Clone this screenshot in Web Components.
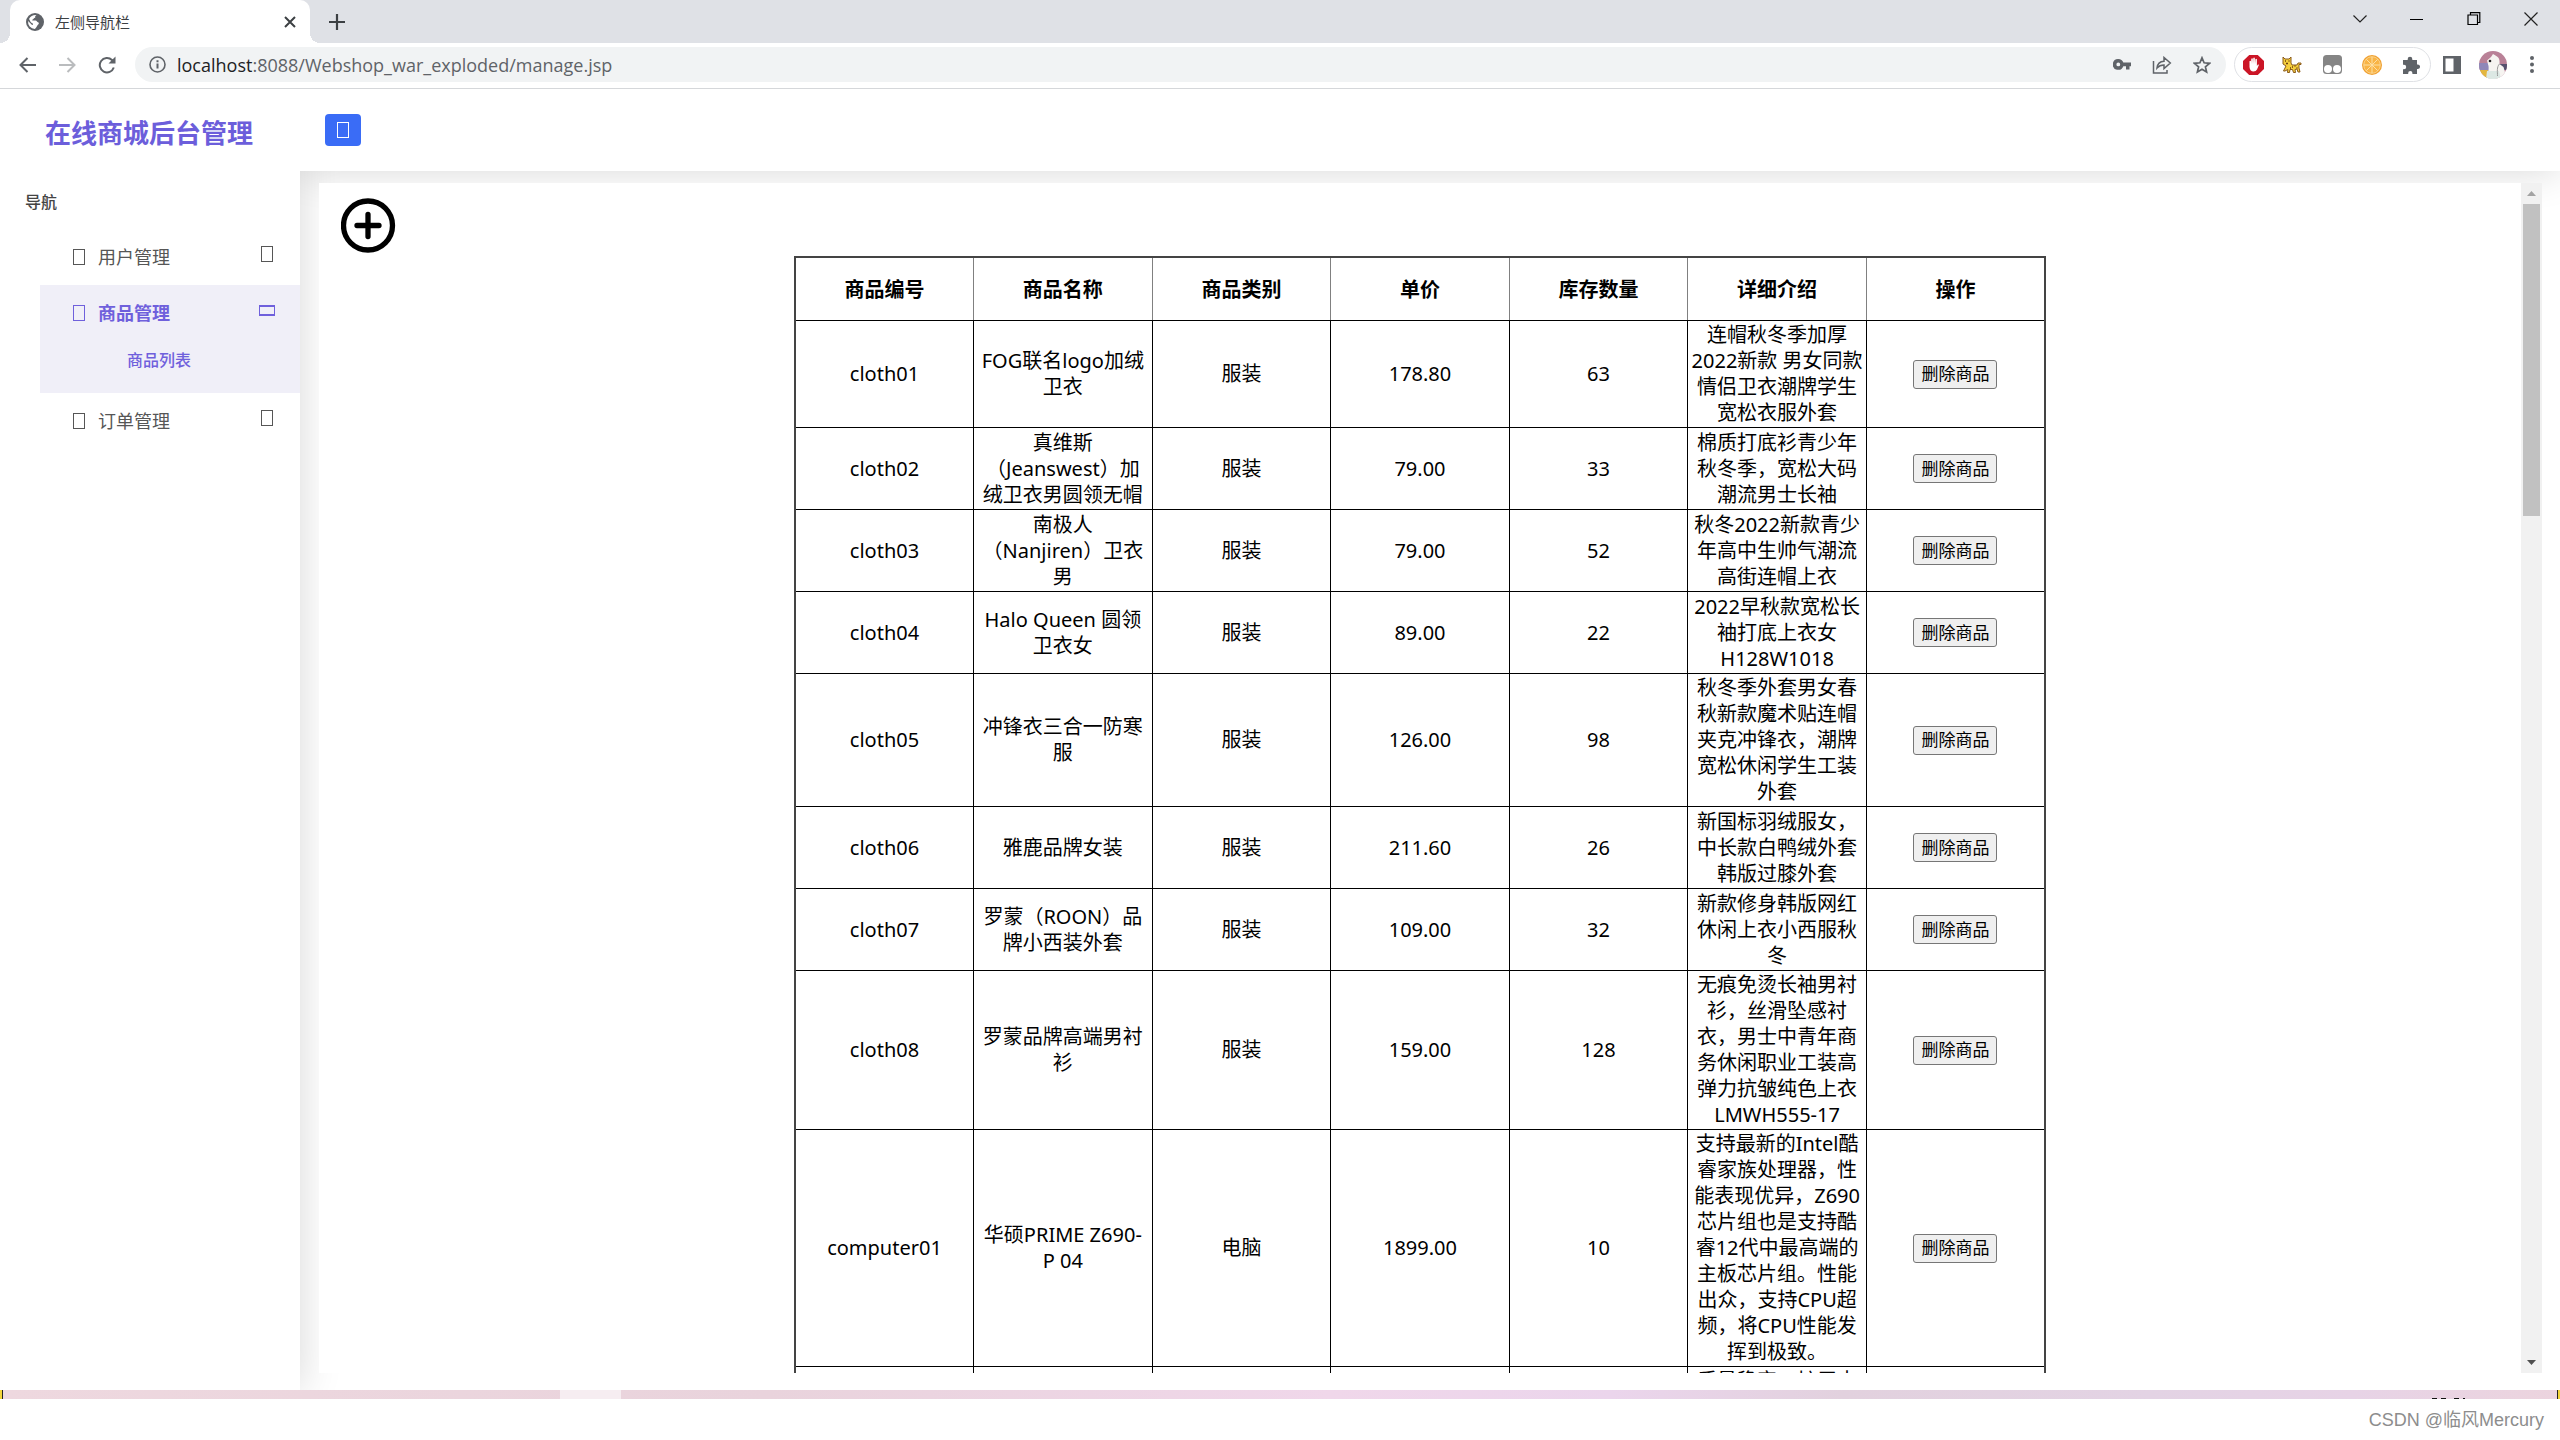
<!DOCTYPE html>
<html lang="zh-CN">
<head>
<meta charset="utf-8">
<title>左侧导航栏</title>
<style>
  html, body { margin: 0; height: 100%; }
  body {
    font-family: "Noto Sans", "Noto Sans CJK SC", sans-serif;
    font-size: 20px; line-height: 26px; color: #000; background: #fff;
    text-spacing-trim: space-all;
  }
</style>
</head>
<body>
<shop-desktop></shop-desktop>

<script>
const define = (name, html, setup) => {
  const template = document.createElement('template');
  template.innerHTML = html;
  customElements.define(name, class extends HTMLElement {
    constructor() {
      super();
      this.attachShadow({ mode: 'open' }).append(template.content.cloneNode(true));
    }
    connectedCallback() { if (setup) setup(this, this.shadowRoot); }
  });
};

/* Window title bar with its tab */
define('tab-strip', `
  <style>
    :host { display: flex; height: 43px; flex: none; background: #dfe1e6; padding: 0 1px 0 10px; }
    .tab { position: relative; display: flex; align-items: center; width: 300px; box-sizing: border-box;
      padding: 0 12px 0 16px; background: #fff; border-radius: 10px 10px 0 0; color: #3c4043; font-size: 15px; }
    .tab::before, .tab::after { content: ""; position: absolute; bottom: 0; width: 10px; height: 10px; }
    .tab::before { left: -10px; background: radial-gradient(circle at 0 0, transparent 10px, #fff 10px); }
    .tab::after { right: -10px; background: radial-gradient(circle at 100% 0, transparent 10px, #fff 10px); }
    .name { margin-left: 11px; flex: 1; }
    button { border: 0; padding: 0; background: none; display: grid; place-items: center; }
    .close { width: 16px; height: 40px; }
    .new { width: 54px; height: 43px; }
    .win { margin-left: auto; display: flex; }
    .win button { width: 57px; height: 38px; }
    svg { display: block; }
  </style>
  <div class="tab">
    <svg width="18" height="18" viewBox="0 0 18 18"><circle cx="9" cy="9" r="9" fill="#5f6368"/><path d="M10.500 2 9 3.300c.8.700.3 1.600-.6 1.700-.9.100-.5 1.200-1.600 1.400-.9.200-.8 1 .2 1.100l2.600.1c1.300.1 1.100 1.500 2.300 1.600 1.200.2 1.200 1.500.3 2.300-.9.700-1 1.600-1.700 2.500-.5.700-1 1.400-1.600 2A7 7 0 0 1 2.100 8l3.700 3.700c.4.500 1.200.3 1.200-.5 0-.9-.8-1.100-1.600-1.500C4.300 9 4 7.500 3 6 4.500 3 7.500 1.600 10.500 2z" fill="#fff"/></svg>
    <span class="name">左侧导航栏</span>
    <button class="close" aria-label="关闭标签页"><svg width="12" height="12" viewBox="0 0 12 12"><path d="M1 1l10 10M11 1 1 11" stroke="#3c4043" stroke-width="2"/></svg></button>
  </div>
  <button class="new" aria-label="新标签页"><svg width="16" height="16" viewBox="0 0 16 16"><path d="M8 0v16M0 8h16" stroke="#3c4043" stroke-width="2.200"/></svg></button>
  <div class="win">
    <button aria-label="搜索标签页"><svg width="14" height="8" viewBox="0 0 14 8"><path d="M.5.5 7 7 13.500.5" fill="none" stroke="#222" stroke-width="1.200"/></svg></button>
    <button aria-label="最小化"><svg width="13" height="1"><rect width="13" height="1"/></svg></button>
    <button aria-label="还原"><svg width="14" height="14" viewBox="0 0 14 14"><path d="M1 3h9.500v9.500H1zM3.500 3V.7h9.300V10.500h-2.300" fill="none" stroke="#000" stroke-width="1.200"/></svg></button>
    <button aria-label="关闭"><svg width="14" height="14" viewBox="0 0 14 14"><path d="M.5.5l13 13M13.500.5l-13 13" stroke="#222" stroke-width="1.200"/></svg></button>
  </div>`);

/* Address row */
define('address-bar', `
  <style>
    :host { display: flex; align-items: center; height: 43px; flex: none; padding: 0 10px 2px 7px; background: #fff;
      border-bottom: 1px solid #d5d7da; }
    button { border: 0; padding: 0; width: 40px; height: 34px; background: none; display: grid; place-items: center; flex: none; }
    svg { display: block; flex: none; }
    .box { flex: 1; display: flex; align-items: center; height: 35px; margin-left: 8px; background: #f1f3f4; border-radius: 18px; padding-left: 14px; padding-right: 4px; }
    .url { flex: 1; margin-left: 11px; font-size: 18px; font-family: "Open Sans", sans-serif; color: #5f6368; }
    .url b { font-weight: 400; color: #202124; }
    .ext { display: flex; margin: 0 1px 0 8px; border: 1px solid #dfe1e5; border-radius: 18px; height: 33px; align-items: center; }
    .ext button:first-child { width: 37px; }
    .ext button:last-child { width: 38px; }
    .me { width: 42px; } .dots { width: 36px; }
  </style>
  <button aria-label="返回"><svg width="17" height="16" viewBox="0 0 17 16"><path d="M17 8H2M8.500 1 1.500 8l7 7" fill="none" stroke="#5f6368" stroke-width="2"/></svg></button>
  <button aria-label="前进"><svg width="17" height="16" viewBox="0 0 17 16"><path d="M0 8h15M8.500 1l7 7-7 7" fill="none" stroke="#babcbe" stroke-width="2"/></svg></button>
  <button aria-label="刷新"><svg width="18" height="18" viewBox="0 0 18 18"><path d="M15.800 11.500A7.200 7.200 0 1 1 14 4l1.500 1.500" fill="none" stroke="#5f6368" stroke-width="2"/><path d="M17.500.5v7h-7z" fill="#5f6368"/></svg></button>
  <div class="box">
    <svg width="17" height="17" viewBox="0 0 17 17"><circle cx="8.500" cy="8.500" r="7.500" fill="none" stroke="#5f6368" stroke-width="1.600"/><path d="M8.500 7.500v5M8.500 4.200v2" stroke="#5f6368" stroke-width="2"/></svg>
    <span class="url"><b>localhost</b>:8088/Webshop_war_exploded/manage.jsp</span>
    <button aria-label="密码"><svg width="18" height="11" viewBox="0 0 18 11"><path d="M5.300 0a5.500 5.300 0 0 1 5 3.600H18v3.600h-1.500v3.400H13V7.200h-2.700A5.400 5.400 0 1 1 5.300 0zm0 3.500a1.900 1.900 0 1 0 0 3.800 1.900 1.900 0 0 0 0-3.800z" fill="#5f6368" fill-rule="evenodd"/></svg></button>
    <button aria-label="分享"><svg width="20" height="18" viewBox="0 0 20 18"><path d="M1.500 5v12H15v-3M5 12c.5-4.500 3-6.500 7-6.700V1.500L18.300 7 12 12.500V9C9 9 7 9.800 5 12z" fill="none" stroke="#5f6368" stroke-width="1.500"/></svg></button>
    <button aria-label="收藏"><svg width="18" height="18" viewBox="0 0 18 18"><path d="M9 1.800l2.100 5 5.400.5-4.100 3.500 1.200 5.300L9 13.300l-4.600 2.800 1.200-5.300L1.500 7.300l5.400-.5z" fill="none" stroke="#5f6368" stroke-width="1.700"/></svg></button>
  </div>
  <div class="ext">
    <button aria-label="广告拦截"><svg width="21" height="20" viewBox="0 0 21 20"><path d="M6.200 0h8.600L21 6v8l-6.200 6H6.200L0 14V6z" fill="#cb1526"/><path d="M6.500 12V6.200q.8-.8 1.500 0V9l.3-5.300q.8-.8 1.500 0L10 9l.3-6q.8-.8 1.500 0L12 9l.4-4.800q.8-.8 1.500 0V11l1-1.500q1.200-.4 1 .6L14 14.500q-1 2-3.500 2Q7 16.500 6.500 12z" fill="#fff"/></svg></button>
    <button aria-label="小猫"><svg width="20" height="18" viewBox="0 0 20 18"><path d="M1 1l2 2h4l2-2v6l1 2h5l1-2h3v1.500h-2V12l1 4h-2l-1-3-2 .5.500 3h-2l-1-3H8l-.500 3h-2l.300-3L3 15H1.500L4 10 1 8z" fill="#f5cf3c" stroke="#8a5a1c"/><path d="M3 5h1M6.500 5h1M4 7.500h2M10 11h1M12.500 10h1M8 12h1M14.500 12h1" stroke="#6b3f10" stroke-width="1.300"/></svg></button>
    <button aria-label="脚本"><svg width="19" height="19" viewBox="0 0 19 19"><rect width="19" height="19" rx="3.500" fill="#858585"/><circle cx="5" cy="14" r="4" fill="#fff"/><circle cx="14" cy="14" r="4" fill="#fff"/></svg></button>
    <button aria-label="橙子"><svg width="20" height="20" viewBox="0 0 20 20"><circle cx="10" cy="10" r="10" fill="#f0a030"/><circle cx="10" cy="10" r="8.300" fill="#f9b445" stroke="#fbd48c"/><path d="M10 2v16M2 10h16M4.300 4.300l11.400 11.400M15.700 4.300 4.300 15.700" stroke="#fde0a6"/></svg></button>
    <button aria-label="扩展程序"><svg width="18" height="18" viewBox="0 0 18 18"><path d="M1 4h4.700V3a2.300 2.300 0 0 1 4.600 0v1H15v4.500h.8a2.200 2.200 0 0 1 0 4.500H15v5h-4.600v-1a2 2 0 0 0-4.200 0v1H1v-4.800h1a2.200 2.200 0 0 0 0-4.400H1z" fill="#5f6368"/></svg></button>
  </div>
  <button aria-label="侧边栏"><svg width="18" height="18" viewBox="0 0 18 18"><path d="M0 0h18v18H0zM2.500 2.500v13h8v-13z" fill="#5f6368" fill-rule="evenodd"/></svg></button>
  <button class="me" aria-label="用户"><svg width="28" height="28" viewBox="0 0 28 28"><defs><clipPath id="c"><circle cx="14" cy="14" r="14"/></clipPath></defs><g clip-path="url(#c)"><path d="M0 0h28v28H0z" fill="#b98197"/><path d="M0 12h10v8H0z" fill="#8f87b8"/><path d="M0 19h9v9H0z" fill="#e3b63f"/><path d="M19 13h9v6h-9z" fill="#56506e"/><path d="M8 28c1-6 2-9 1.500-13L8 9.500 12 6l2-3 2.500 1.500C20 6 21 9 20.500 13l4 3L28 28z" fill="#f6f4f1"/><path d="M8 20h12l2 8H7z" fill="#dce8e4"/><path d="M20.500 13c-3 3-2 8-2 12" stroke="#999" fill="none"/><circle cx="11" cy="10" r="1.300" fill="#222"/></g></svg></button>
  <button class="dots" aria-label="菜单"><svg width="4" height="17" viewBox="0 0 4 17"><g fill="#5f6368"><circle cx="2" cy="2" r="2"/><circle cx="2" cy="8.500" r="2"/><circle cx="2" cy="15" r="2"/></g></svg></button>`);

/* Empty glyph box shown by an icon font that has not loaded */
define('glyph-box', `
  <style>
    :host { display: block; flex: none; box-sizing: border-box; width: 12px; height: 16px; border: 1px solid currentColor; }
    :host([wide]) { width: 16px; height: 11px; border-width: 2px 1px; }
  </style>`);

/* One entry of the side menu; slotted links are its sub pages */
define('nav-entry', `
  <style>
    :host { display: block; margin-left: 40px; color: #565656; font-size: 18px; }
    :host([open]) { color: #6f60dc; background: #f0eff8; }
    a { display: flex; align-items: center; height: 56px; padding: 0 25px 0 33px; color: inherit; text-decoration: none; }
    :host([open]) a { font-weight: 700; }
    span { flex: 1; margin-left: 13px; }
    .sub { display: none; }
    :host([open]) .sub { display: block; height: 52px; padding: 5px 0 0 87px; box-sizing: border-box; }
    ::slotted(a) { color: inherit; font-size: 16px; font-weight: 500; text-decoration: none; }
    .mark { margin-bottom: 6px; width: 16px; display: grid; place-items: center; }
  </style>
  <a href="#"><glyph-box></glyph-box><span></span><div class="mark"></div></a>
  <div class="sub"><slot></slot></div>`, (el, root) => {
    root.querySelector('span').textContent = el.getAttribute('label');
    const box = document.createElement('glyph-box');
    if (el.hasAttribute('open')) box.setAttribute('wide', '');
    root.querySelector('.mark').replaceChildren(box);
  });

define('side-nav', `
  <style>
    :host { display: block; width: 300px; flex: none; background: #fff; box-shadow: 0 0 40px rgba(0,0,0,.16); }
    h1 { margin: 0; padding: 25px 2px 0 0; font-size: 26px; line-height: 38px; text-align: center; color: #6c5edb; }
    h2 { margin: 0; padding: 37px 0 14px 25px; font-size: 16px; line-height: 26px; font-weight: 500; color: #444; }
  </style>
  <h1>在线商城后台管理</h1>
  <h2>导航</h2>
  <nav>
    <nav-entry label="用户管理"></nav-entry>
    <nav-entry label="商品管理" open><a href="#list">商品列表</a></nav-entry>
    <nav-entry label="订单管理"></nav-entry>
  </nav>`);

define('top-bar', `
  <style>
    :host { display: flex; align-items: center; box-sizing: border-box; height: 82px; flex: none; padding-left: 25px; background: #fff;
      box-shadow: 0 0 40px rgba(0,0,0,.16); }
    button { width: 36px; height: 32px; border: 0; border-radius: 4px; padding: 0; background: #3a6cf6; color: #fff; display: grid; place-items: center; }
  </style>
  <button aria-label="折叠菜单"><glyph-box></glyph-box></button>`);

const products = [
  ['cloth01', 'FOG联名logo加绒卫衣', '服装', '178.80', '63', '连帽秋冬季加厚2022新款 男女同款情侣卫衣潮牌学生宽松衣服外套'],
  ['cloth02', '真维斯（Jeanswest）加\n绒卫衣男圆领无帽', '服装', '79.00', '33', '棉质打底衫青少年秋冬季，宽松大码潮流男士长袖'],
  ['cloth03', '南极人（Nanjiren）卫衣男', '服装', '79.00', '52', '秋冬2022新款青少年高中生帅气潮流高街连帽上衣'],
  ['cloth04', 'Halo Queen 圆领卫衣女', '服装', '89.00', '22', '2022早秋款宽松长袖打底上衣女H128W1018'],
  ['cloth05', '冲锋衣三合一防寒服', '服装', '126.00', '98', '秋冬季外套男女春秋新款魔术贴连帽夹克冲锋衣，潮牌宽松休闲学生工装外套'],
  ['cloth06', '雅鹿品牌女装', '服装', '211.60', '26', '新国标羽绒服女，中长款白鸭绒外套韩版过膝外套'],
  ['cloth07', '罗蒙（ROON）品牌小西装外套', '服装', '109.00', '32', '新款修身韩版网红休闲上衣小西服秋冬'],
  ['cloth08', '罗蒙品牌高端男衬衫', '服装', '159.00', '128', '无痕免烫长袖男衬衫，丝滑坠感衬衣，男士中青年商务休闲职业工装高弹力抗皱纯色上衣LMWH555-17'],
  ['computer01', '华硕PRIME Z690-\nP 04', '电脑', '1899.00', '10', '支持最新的Intel酷睿家族处理器，性能表现优异，Z690芯片组也是支持酷睿12代中最高端的主板芯片组。性能出众，支持CPU超频，将CPU性能发挥到极致。'],
  ['', '', '', '', '', '质量稳定，扩展丰']
];

define('product-table', `
  <style>
    :host { display: block; width: 1252px; max-width: 100%; margin: 3px auto 0; }
    table { width: 100%; table-layout: fixed; border-collapse: collapse; border: 2px solid #444; text-align: center; }
    th { height: 60px; padding: 2px 1px 0; border: 1px solid #808080; border-bottom-color: #000; }
    td { height: 79px; padding: 1px; border: 1px solid #000; white-space: pre-line; }
    tr:last-child td { vertical-align: top; }
    button { height: 29px; width: 84px; padding: 0; border: 1px solid #767676; border-radius: 3px; background: #efefef;
      font: inherit; font-size: 17px; line-height: 20px; color: #000; vertical-align: middle; }
  </style>
  <table>
    <thead><tr><th>商品编号</th><th>商品名称</th><th>商品类别</th><th>单价</th><th>库存数量</th><th>详细介绍</th><th>操作</th></tr></thead>
    <tbody></tbody>
  </table>`, (el, root) => {
    const body = root.querySelector('tbody');
    body.replaceChildren();
    for (const product of products) {
      const row = body.insertRow();
      for (const value of product) row.insertCell().textContent = value;
      const action = row.insertCell();
      if (!product[0]) continue;
      const remove = document.createElement('button');
      remove.textContent = '删除商品';
      action.append(remove);
    }
  });

define('scroll-rail', `
  <style>
    :host { display: flex; flex-direction: column; align-items: center; width: 21px; flex: none; background: #f1f1f1; }
    .thumb { width: 17px; height: 312px; background: #c1c1c1; }
    .cap { height: 21px; display: grid; place-items: center; }
    .gap { flex: 1; }
    svg { display: block; }
  </style>
  <div class="cap"><svg width="9" height="5"><path d="M0 5 4.500 0 9 5z" fill="#a3a3a3"/></svg></div>
  <div class="thumb"></div><div class="gap"></div>
  <div class="cap"><svg width="9" height="5"><path d="M0 0h9L4.500 5z" fill="#505050"/></svg></div>`);

/* Framed product page */
define('product-page', `
  <style>
    :host { position: relative; display: flex; flex: 1; min-height: 0; margin: 12px 18px 17px 19px; background: #fff; }
    main { flex: 1; min-width: 0; overflow: hidden; padding-top: 15px; }
    .add { display: block; width: 55px; height: 55px; margin-left: 22px; }
    svg { display: block; }
  </style>
  <main>
    <a class="add" href="#add" aria-label="添加商品"><svg width="55" height="55" viewBox="0 0 55 55"><circle cx="27" cy="27.500" r="24.500" fill="none" stroke="#000" stroke-width="5.300"/><path d="M27 16.500v22M16 27.500h22" stroke="#000" stroke-width="5.300" stroke-linecap="round"/></svg></a>
    <product-table></product-table>
  </main>
  <scroll-rail></scroll-rail>`);

define('task-strip', `
  <style>
    :host { display: flex; height: 9px; flex: none; box-sizing: border-box; border-left: 2px solid #f3d53a; border-right: 2px solid #f3d53a;
      background: linear-gradient(90deg, #eed8df 0, #e9d3dc 30%, #f0d7ea 52%, #ebd5ec 63%, #e2d1de 72%, #e3d3e4 84%, #e7d3e6 92%, #ecd4de 100%); }
    .edge { width: 1px; background: #222; }
    .active { width: 61px; margin-left: 557px; background: #f6edf1; }
    .clock { margin-left: auto; align-self: flex-end; display: flex; gap: 4px; padding-right: 92px; }
    .clock i { width: 5px; height: 1px; background: #111; }
    .clock i:nth-child(3) { margin-left: 4px; }
    .clock i:nth-child(4) { width: 2px; }
  </style>
  <div class="edge"></div><div class="active"></div>
  <div class="clock"><i></i><i></i><i></i><i></i></div><div class="edge"></div>`);

define('author-mark', `
  <style>
    :host { display: block; height: 41px; line-height: 43px; flex: none; text-align: right; padding-right: 16px;
      font-family: "Liberation Sans", "Noto Sans CJK SC", sans-serif; font-size: 18px; color: #8d8d8d; }
  </style>
  <slot></slot>`);

define('shop-desktop', `
  <style>
    :host { display: flex; flex-direction: column; height: 100vh; overflow: hidden; }
    .shop { flex: 1; min-height: 0; display: flex; overflow: hidden; }
    .view { flex: 1; min-width: 0; display: flex; flex-direction: column; overflow: hidden; }
    top-bar { position: relative; }
  </style>
  <tab-strip></tab-strip>
  <address-bar></address-bar>
  <div class="shop">
    <side-nav></side-nav>
    <div class="view"><top-bar></top-bar><product-page></product-page></div>
  </div>
  <task-strip></task-strip>
  <author-mark>CSDN @临风Mercury</author-mark>`);
</script>
</body>
</html>
